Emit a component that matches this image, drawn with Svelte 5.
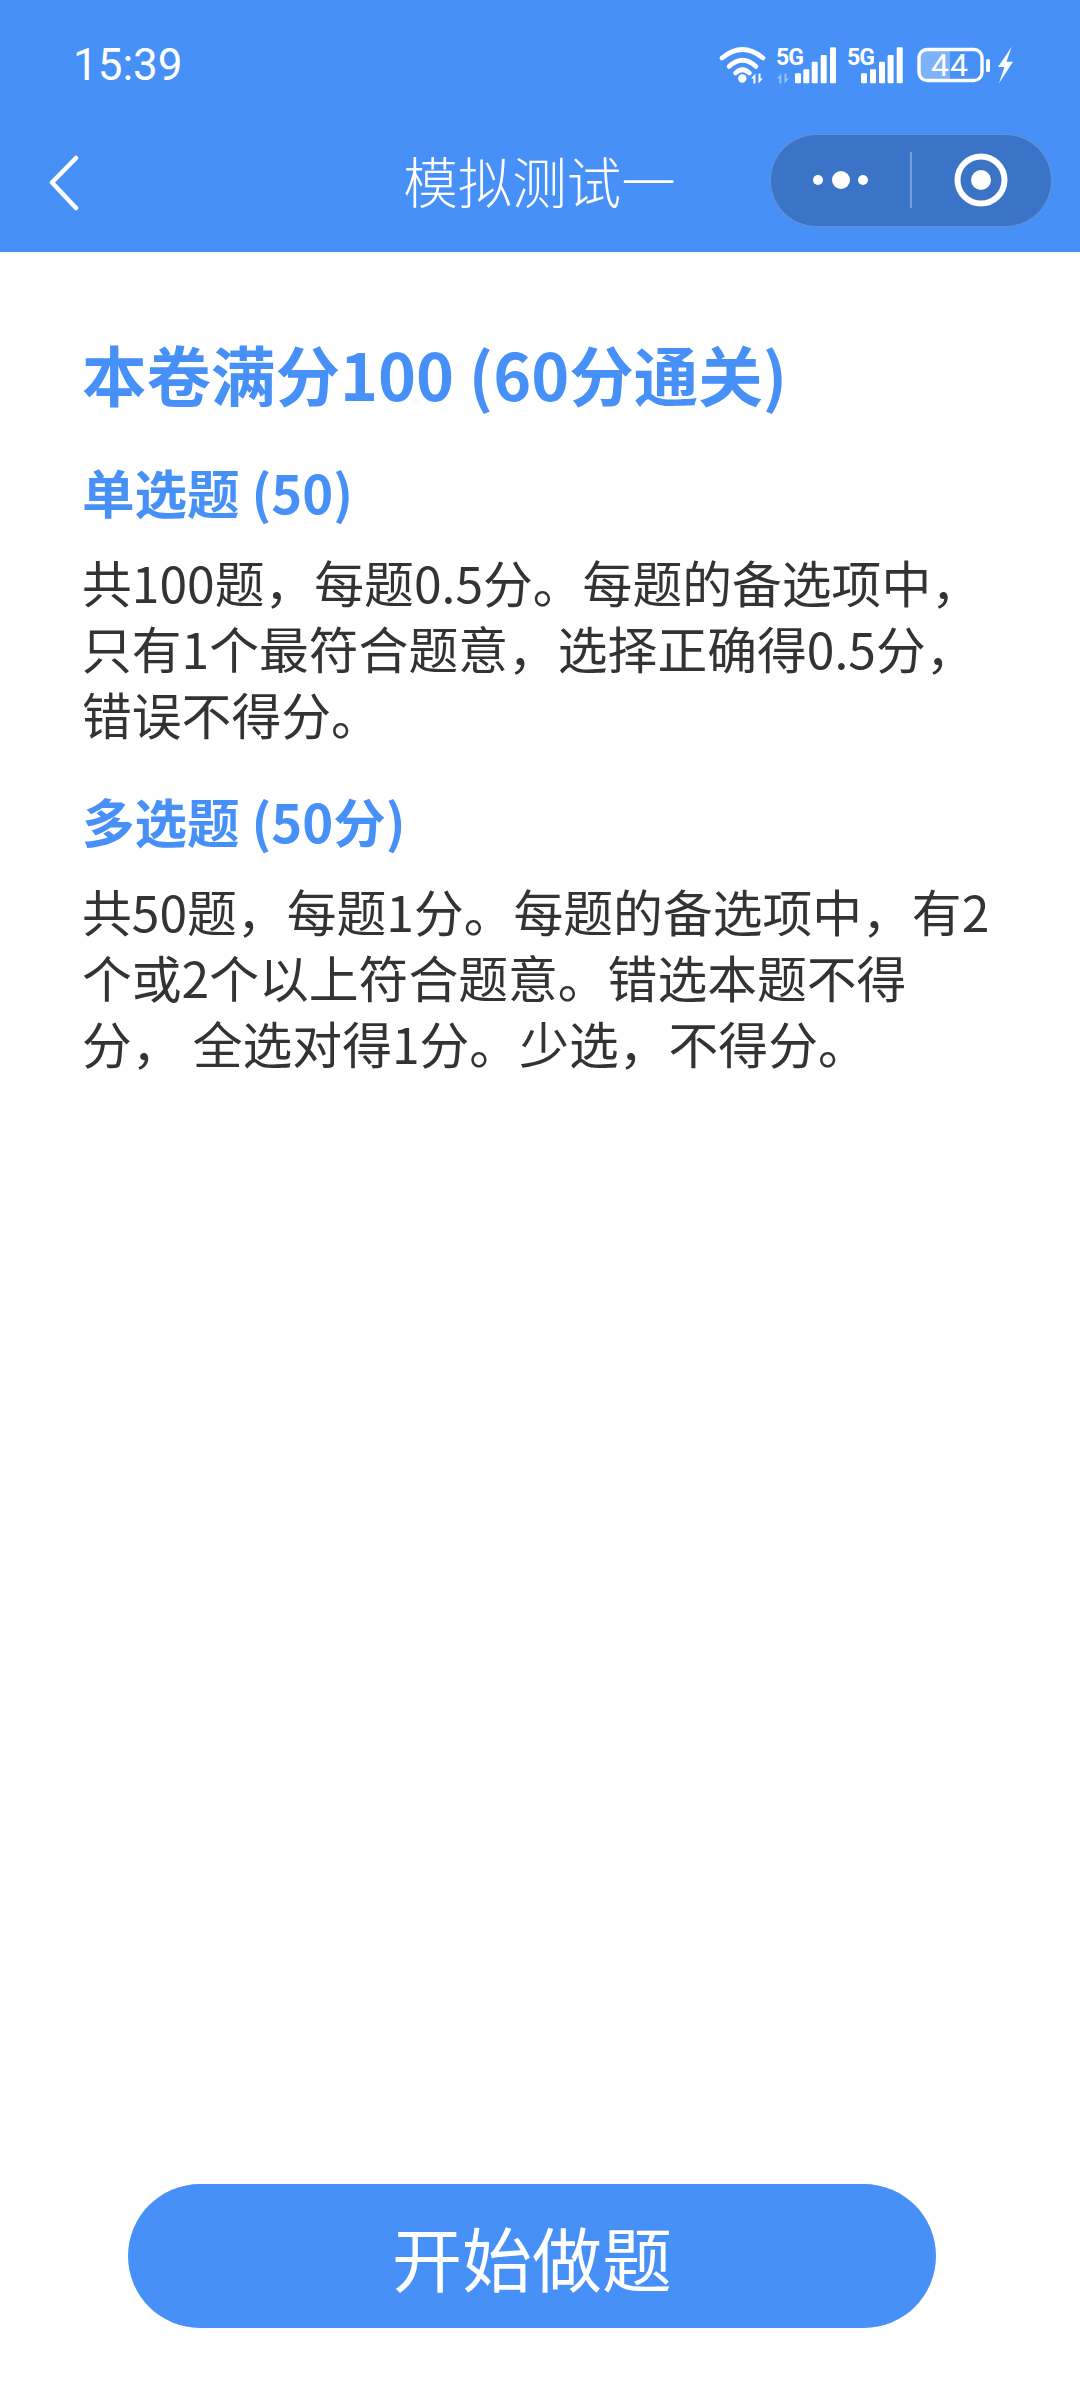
<script>
  const bars = [
    { x: 80, y: 31.3 }, { x: 88.3, y: 27.3 }, { x: 96.7, y: 19.7 }, { x: 105.7, y: 13 }, { x: 115, y: 5.3 }
  ];
  const bars2 = [
    { x: 146, y: 31.3 }, { x: 155, y: 27.3 }, { x: 164, y: 19.7 }, { x: 172.6, y: 13 }, { x: 181.7, y: 5.3 }
  ];
</script>

<div class="page">
  <header class="header">
    <div class="status">
      <span class="time">15:39</span>
      <svg class="status-icons" viewBox="0 0 300 50" width="300" height="50" aria-hidden="true">
        <g fill="none" stroke="#fff" stroke-width="4.6" stroke-linecap="round">
          <path d="M7 16Q27.5 -1 48 16" />
          <path d="M14 24.5Q27.5 12 41 24.5" />
          <path d="M20.5 31Q27.5 24.5 34.5 31" />
        </g>
        <circle cx="27.3" cy="36.5" r="4.2" fill="#fff" />
        <path d="M36 36.5l4.4-5v10h-2v-5zM43.500 31.500h2v5h2.400l-4.400 5z" fill="#fff" />
        <path d="M62 36.5l4.4-5v10h-2v-5zM69.500 31.500h2v5h2.400l-4.400 5z" fill="#fff" opacity="0.45" />
        <text x="61" y="23" class="five-g">5G</text>
        {#each bars as b}
          <rect x={b.x} y={b.y} width="6" height={41.3 - b.y} rx="1" fill="#fff" />
        {/each}
        <text x="132" y="23" class="five-g">5G</text>
        {#each bars2 as b}
          <rect x={b.x} y={b.y} width="6" height={41.3 - b.y} rx="1" fill="#fff" />
        {/each}
        <path d="M209 8h26v30.500h-26a5 5 0 0 1-5-5v-20.500a5 5 0 0 1 5-5z" fill="#fff" opacity="0.3" />
        <rect x="204" y="7.500" width="63" height="31" rx="8" fill="none" stroke="#fff" stroke-width="3.400" />
        <text x="235" y="34" class="batt">44</text>
        <rect x="271" y="17" width="4" height="13" rx="1.500" fill="#fff" />
        <path d="M296.700 4.700L283 25H289.500L284 41.300L298 19.700H291.500z" fill="#fff" />
      </svg>
    </div>
    <nav class="nav">
      <svg class="back" viewBox="0 0 30 56" width="30" height="56" aria-hidden="true">
        <path d="M27 3L3 27.500L27 53" fill="none" stroke="#fff" stroke-width="4.500" stroke-linecap="round" stroke-linejoin="round" />
      </svg>
      <h1 class="nav-title">模拟测试一</h1>
      <div class="capsule-wrap">
        <div class="capsule">
          <div class="cap-part">
            <svg viewBox="0 0 60 20" width="60" height="20" aria-hidden="true">
              <circle cx="7" cy="10" r="5" fill="#fff" />
              <circle cx="30" cy="10" r="9" fill="#fff" />
              <circle cx="52" cy="10" r="5" fill="#fff" />
            </svg>
          </div>
          <span class="divider"></span>
          <div class="cap-part">
            <svg viewBox="0 0 54 54" width="54" height="54" aria-hidden="true">
              <circle cx="27" cy="27" r="23.500" fill="none" stroke="#fff" stroke-width="6" />
              <circle cx="27" cy="27" r="10" fill="#fff" />
            </svg>
          </div>
        </div>
      </div>
    </nav>
  </header>

  <main class="content">
    <h2 class="title">本卷满分100 (60分通关)</h2>
    <h3 class="sec first">单选题 (50)</h3>
    <p class="body">共100题，每题0.5分。每题的备选项中，只有1个最符合题意，选择正确得0.5分，错误不得分。</p>
    <h3 class="sec second">多选题 (50分)</h3>
    <p class="body">共50题，每题1分。每题的备选项中，有2个或2个以上符合题意。错选本题不得分， 全选对得1分。少选，不得分。</p>
  </main>

  <footer class="footer">
    <button class="start">开始做题</button>
  </footer>
</div>

<style>
  :global(body) {
    margin: 0;
    background: #fff;
  }
  .page {
    width: 1080px;
    height: 2398px;
    display: flex;
    flex-direction: column;
    font-family: "Noto Sans CJK SC", "Noto Sans", sans-serif;
    background: #fff;
    overflow: hidden;
  }
  .header {
    height: 252px;
    background: #4690f8;
    color: #fff;
    flex: none;
  }
  .status {
    height: 84px;
    display: flex;
    justify-content: space-between;
    padding: 42px 65px 0 73px;
    box-sizing: border-box;
    align-items: flex-start;
  }
  .time {
    font-family: Roboto, "Noto Sans", sans-serif;
    font-size: 44px;
    line-height: 44px;
    letter-spacing: 0;
    margin-top: 1px;
  }
  .five-g {
    font-family: "Roboto", sans-serif;
    font-size: 23px;
    font-weight: 700;
    fill: #fff;
    letter-spacing: -1px;
  }
  .batt {
    font-family: "Roboto", sans-serif;
    font-size: 32px;
    fill: #fff;
    text-anchor: middle;
    letter-spacing: 1px;
  }
  .nav {
    height: 168px;
    display: grid;
    grid-template-columns: 1fr auto 1fr;
    align-items: center;
    padding: 24px 28px 0 49px;
    box-sizing: border-box;
  }
  .back {
    display: block;
    margin-top: 6px;
  }
  .nav-title {
    margin: 0;
    font-size: 54.500px;
    line-height: 1.2;
    font-weight: 300;
    transform: translateX(-11px);
  }
  .capsule-wrap {
    display: flex;
    justify-content: flex-end;
  }
  .capsule {
    width: 282px;
    height: 93px;
    box-sizing: border-box;
    border-radius: 47px;
    border: 1.500px solid rgba(255, 255, 255, 0.22);
    background: #3b73c6;
    display: flex;
    align-items: center;
  }
  .cap-part {
    flex: 1;
    display: flex;
    justify-content: center;
    align-items: center;
  }
  .cap-part svg {
    display: block;
  }
  .divider {
    width: 1.500px;
    height: 56px;
    background: rgba(255, 255, 255, 0.3);
  }
  .content {
    flex: 1;
    padding: 81px 82px 0 82px;
  }
  .title {
    margin: 0;
    color: #4690f8;
    font-size: 64.500px;
    line-height: 80px;
    font-weight: 700;
  }
  .sec {
    margin: 44px 0 0;
    color: #4690f8;
    font-size: 52.500px;
    line-height: 68px;
    font-weight: 700;
  }
  .sec.second {
    margin-top: 40px;
  }
  .body {
    margin: 23px 0 0;
    color: #333;
    font-size: 49.800px;
    line-height: 66px;
    font-weight: 400;
  }
  .footer {
    flex: none;
    height: 214px;
    display: flex;
    justify-content: center;
    align-items: flex-start;
  }
  .start {
    width: 808px;
    height: 144px;
    margin-left: -16px;
    border: 0;
    border-radius: 72px;
    background: #4690f8;
    color: #fff;
    font-family: inherit;
    font-size: 70px;
    font-weight: 400;
  }
</style>
